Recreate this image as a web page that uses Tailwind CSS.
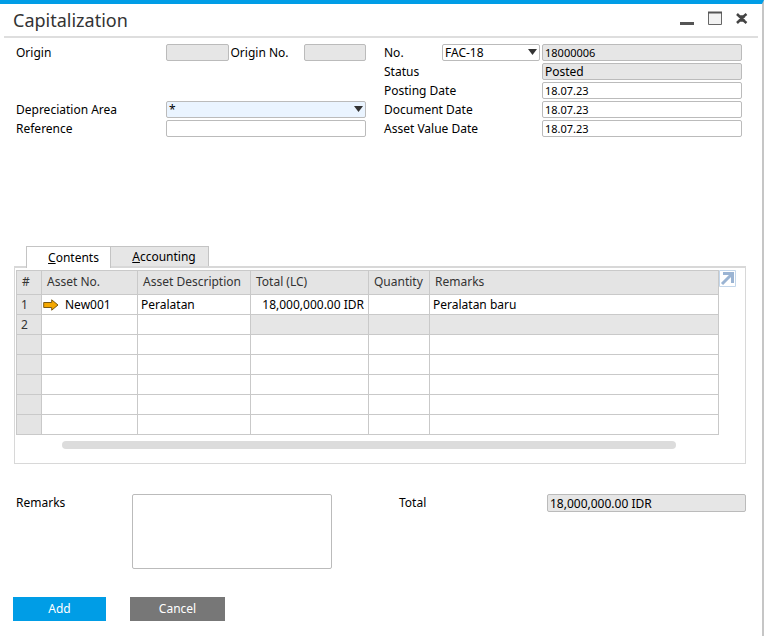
<!DOCTYPE html>
<html lang="en">
  <head>
    <meta charset="UTF-8" />
    <meta name="viewport" content="width=device-width, initial-scale=1.0" />
    <title>Capitalization</title>
    <script src="https://cdn.jsdelivr.net/npm/@tailwindcss/browser@4"></script>
  </head>
  <body class="bg-white font-['Noto_Sans',sans-serif] text-xs text-black">
    <div class="min-h-screen border-t-4 border-r-2 border-t-[#009de6] border-r-[#c6c6c6]">
      <!-- Title bar -->
      <header class="mr-1 ml-1 flex h-[34px] items-center justify-between border-b-2 border-[#dedede] pr-[9px] pl-[9px]">
        <h1 class="text-lg text-[#333]">Capitalization</h1>
        <div class="flex items-center gap-3 pb-1">
          <button aria-label="Minimize">
            <svg class="block" width="16" height="16" viewBox="0 0 16 16"><path d="M1 13.5h14" stroke="#555" stroke-width="3" /></svg>
          </button>
          <button aria-label="Maximize">
            <svg class="block" width="16" height="16" viewBox="0 0 16 16"><path d="M1.500 2.500h13v12h-13z" fill="#f2f2f2" stroke="#666" /><path d="M1 2.500h14" stroke="#555" stroke-width="2" /></svg>
          </button>
          <button aria-label="Close">
            <svg class="block" width="14" height="16" viewBox="0 0 14 16"><path d="M2 4l2.500 2.500h4L11.500 4M2 13l2.500-2.500h4L11.500 13M4 6l5.500 5M9.500 6L4 11" fill="none" stroke="#444" stroke-width="2.500" /></svg>
          </button>
        </div>
      </header>

      <!-- Header fields -->
      <form class="mt-[6px] grid grid-cols-[350fr_358fr] gap-x-[18px] pr-5 pl-4">
        <div class="grid auto-rows-[17px] grid-cols-[150px_1fr] content-start items-center gap-y-[2px]">
          <label for="origin">Origin</label>
          <div class="flex items-center">
            <input id="origin" type="text" readonly class="h-[17px] w-0 flex-1 rounded-[2px] border border-[#bbb] bg-[#e6e6e6] px-[2px]" />
            <label for="origin-no" class="w-[75px] pl-[2px]">Origin No.</label>
            <input id="origin-no" type="text" readonly class="h-[17px] w-0 flex-1 rounded-[2px] border border-[#bbb] bg-[#e6e6e6] px-[2px]" />
          </div>
          <label for="area" class="row-start-4">Depreciation Area</label>
          <div class="relative row-start-4">
            <select id="area" class="block h-[17px] w-full appearance-none rounded-[2px] border border-[#bbb] bg-[#eaf4ff] px-[2px] leading-[15px]">
              <option>*</option>
            </select>
            <svg class="pointer-events-none absolute top-[5px] right-[3px]" width="9" height="6" viewBox="0 0 9 6"><path d="M0 0h9L4.5 6z" fill="#333" /></svg>
          </div>
          <label for="reference" class="row-start-5">Reference</label>
          <input id="reference" type="text" class="row-start-5 h-[17px] w-full rounded-[2px] border border-[#bbb] px-[2px]" />
        </div>

        <div class="grid auto-rows-[17px] grid-cols-[58px_98px_1fr] content-start items-center gap-y-[2px]">
          <label for="series">No.</label>
          <div class="relative">
            <select id="series" class="block h-[17px] w-full appearance-none rounded-[2px] border border-[#bbb] bg-white px-[2px] leading-[15px]">
              <option>FAC-18</option>
            </select>
            <svg class="pointer-events-none absolute top-[5px] right-[3px]" width="9" height="6" viewBox="0 0 9 6"><path d="M0 0h9L4.5 6z" fill="#333" /></svg>
          </div>
          <div class="pl-[2px]"><input type="text" aria-label="Document number" readonly value="18000006" class="block h-[17px] w-full rounded-[2px] border border-[#bbb] bg-[#e6e6e6] px-[2px] text-[11px]" /></div>
          <label for="status" class="col-span-2">Status</label>
          <div class="pl-[2px]"><input id="status" type="text" readonly value="Posted" class="block h-[17px] w-full rounded-[2px] border border-[#bbb] bg-[#e6e6e6] px-[2px]" /></div>
          <label for="posting" class="col-span-2">Posting Date</label>
          <div class="pl-[2px]"><input id="posting" type="text" value="18.07.23" class="block h-[17px] w-full rounded-[2px] border border-[#bbb] px-[2px] text-[11px]" /></div>
          <label for="document" class="col-span-2">Document Date</label>
          <div class="pl-[2px]"><input id="document" type="text" value="18.07.23" class="block h-[17px] w-full rounded-[2px] border border-[#bbb] px-[2px] text-[11px]" /></div>
          <label for="value-date" class="col-span-2">Asset Value Date</label>
          <div class="pl-[2px]"><input id="value-date" type="text" value="18.07.23" class="block h-[17px] w-full rounded-[2px] border border-[#bbb] px-[2px] text-[11px]" /></div>
        </div>
      </form>

      <!-- Tabs -->
      <div class="mt-[109px] mr-4 ml-[14px]">
        <div role="tablist" class="relative -mb-[2px] flex pl-3">
          <button role="tab" aria-selected="true" class="h-[22px] w-[85px] border border-b-0 border-[#c4c4c4] bg-white pl-[10px]"><span class="underline">C</span>ontents</button>
          <button role="tab" aria-selected="false" class="h-5 w-[98px] border border-b-0 border-l-0 border-[#c4c4c4] bg-[#e6e6e6] pl-[9px]"><span class="underline">A</span>ccounting</button>
        </div>

        <div role="tabpanel" class="border border-t-2 border-[#d8d8d8] pt-[2px] pb-[14px] pl-px">
          <div class="flex items-start pr-[9px]">
            <table class="min-w-0 flex-1 table-fixed border-collapse text-left [&_td]:border [&_td]:border-[#c9c9c9] [&_th]:border [&_th]:border-[#c9c9c9] [&_th]:pb-[2px] [&_th]:font-normal">
              <colgroup>
                <col class="w-[25px]" />
                <col class="w-[96px]" />
                <col class="w-[113px]" />
                <col class="w-[118px]" />
                <col class="w-[61px]" />
                <col />
              </colgroup>
              <thead>
                <tr class="h-6 bg-[#e4e4e4] text-[#333]">
                  <th class="pl-[5px]">#</th>
                  <th class="pl-[5px]">Asset No.</th>
                  <th class="pl-[5px] whitespace-nowrap">Asset Description</th>
                  <th class="pl-[5px]">Total (LC)</th>
                  <th class="pl-[5px]">Quantity</th>
                  <th class="pl-[5px]">Remarks</th>
                </tr>
              </thead>
              <tbody>
                <tr class="h-5">
                  <td class="bg-[#e4e4e4] pl-1 text-[#333]">1</td>
                  <td class="pl-px">
                    <a href="#" class="flex items-center gap-[6px]">
                      <svg width="16" height="12" viewBox="0 0 16 12"><path d="M.7 3.5h8V.8L15 6l-6.3 5.2V8.5h-8z" fill="#f5a800" stroke="#7a5a14" /></svg>
                      New001
                    </a>
                  </td>
                  <td class="pl-[3px]">Peralatan</td>
                  <td class="pr-1 text-right whitespace-nowrap">18,000,000.00 IDR</td>
                  <td></td>
                  <td class="pl-[3px]">Peralatan baru</td>
                </tr>
                <tr class="h-5">
                  <td class="bg-[#e4e4e4] pl-1 text-[#333]">2</td>
                  <td></td>
                  <td></td>
                  <td class="bg-[#e6e6e6]"></td>
                  <td class="bg-[#e6e6e6]"></td>
                  <td class="bg-[#e6e6e6]"></td>
                </tr>
                <tr class="h-5"><td class="bg-[#e4e4e4]"></td><td></td><td></td><td></td><td></td><td></td></tr>
                <tr class="h-5"><td class="bg-[#e4e4e4]"></td><td></td><td></td><td></td><td></td><td></td></tr>
                <tr class="h-5"><td class="bg-[#e4e4e4]"></td><td></td><td></td><td></td><td></td><td></td></tr>
                <tr class="h-5"><td class="bg-[#e4e4e4]"></td><td></td><td></td><td></td><td></td><td></td></tr>
                <tr class="h-5"><td class="bg-[#e4e4e4]"></td><td></td><td></td><td></td><td></td><td></td></tr>
              </tbody>
            </table>
            <button aria-label="Expand table">
              <svg class="block" width="17" height="17" viewBox="0 0 17 17"><path d="M.5.5h16v16H.5z" fill="#fff" stroke="#c3d6ea" /><path d="M4 3.500h9.500V13M13 4L3 14" fill="none" stroke="#9bb4d3" stroke-width="3" /></svg>
            </button>
          </div>
          <!-- Horizontal scroll bar -->
          <div class="mt-[6px] mr-[69px] ml-[46px] h-2 rounded-full bg-[#dcdcdc]"></div>
        </div>
      </div>

      <!-- Footer fields -->
      <div class="mt-[30px] grid grid-cols-[365fr_347fr] gap-x-[18px] pr-4 pl-4">
        <div class="flex items-start">
          <label for="remarks" class="w-[116px] leading-[18px]">Remarks</label>
          <textarea id="remarks" class="mr-[49px] h-[75px] min-w-0 flex-1 resize-none rounded-[2px] border border-[#bbb] px-[2px]"></textarea>
        </div>
        <div class="flex items-start">
          <label for="total" class="w-[148px] leading-[18px]">Total</label>
          <input id="total" type="text" readonly value="18,000,000.00 IDR" class="h-[18px] min-w-0 flex-1 rounded-[2px] border border-[#bbb] bg-[#e6e6e6] px-[2px]" />
        </div>
      </div>

      <div class="mt-7 flex gap-6 pl-[13px] text-white">
        <button class="h-6 w-[93px] bg-[#009de6]">Add</button>
        <button class="h-6 w-[95px] bg-[#777]">Cancel</button>
      </div>
    </div>
  </body>
</html>
